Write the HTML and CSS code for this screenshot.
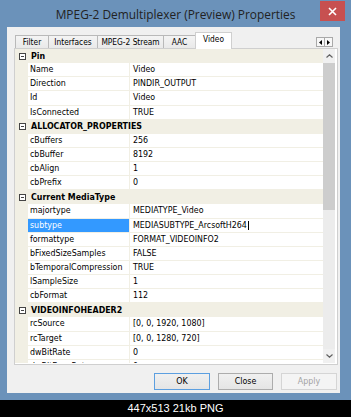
FILE: index.html
```html
<!DOCTYPE html>
<html>
<head>
<meta charset="utf-8">
<link rel="stylesheet" href="styles.css">
</head>
<body>
<div class="window">
  <div class="titlebar">
    <span class="title">MPEG-2 Demultiplexer (Preview) Properties</span>
    <div class="close"><svg width="9" height="9" viewBox="0 0 9 9"><path d="M1 1L8 8M8 1L1 8" stroke="#fff" stroke-width="1.6"/></svg></div>
  </div>
  <div class="frame-body">
    <div class="client">
      <div class="tabbar">
        <div class="tab t1">Filter</div>
        <div class="tab t2">Interfaces</div>
        <div class="tab t3">MPEG-2 Stream</div>
        <div class="tab t4">AAC</div>
        <div class="tab t5 selected">Video</div>
        <div class="tab-scroll">
          <span class="arrowbtn"><svg width="3" height="5" viewBox="0 0 3 5"><path d="M3 0V5L0 2.5Z" fill="#000"/></svg></span>
          <span class="arrowbtn"><svg width="3" height="5" viewBox="0 0 3 5"><path d="M0 0V5L3 2.5Z" fill="#000"/></svg></span>
        </div>
      </div>
      <div class="panel">
        <div class="grid">
          <div class="row cat"><span class="toggle"></span><span class="cat-label">Pin</span></div>
          <div class="row"><span class="gut"></span><span class="name">Name</span><span class="val">Video</span></div>
          <div class="row"><span class="gut"></span><span class="name">Direction</span><span class="val">PINDIR_OUTPUT</span></div>
          <div class="row"><span class="gut"></span><span class="name">Id</span><span class="val">Video</span></div>
          <div class="row"><span class="gut"></span><span class="name">IsConnected</span><span class="val">TRUE</span></div>
          <div class="row cat"><span class="toggle"></span><span class="cat-label">ALLOCATOR_PROPERTIES</span></div>
          <div class="row"><span class="gut"></span><span class="name">cBuffers</span><span class="val">256</span></div>
          <div class="row"><span class="gut"></span><span class="name">cbBuffer</span><span class="val">8192</span></div>
          <div class="row"><span class="gut"></span><span class="name">cbAlign</span><span class="val">1</span></div>
          <div class="row"><span class="gut"></span><span class="name">cbPrefix</span><span class="val">0</span></div>
          <div class="row cat"><span class="toggle"></span><span class="cat-label">Current MediaType</span></div>
          <div class="row"><span class="gut"></span><span class="name">majortype</span><span class="val">MEDIATYPE_Video</span></div>
          <div class="row"><span class="gut"></span><span class="name sel">subtype</span><span class="val edit">MEDIASUBTYPE_ArcsoftH264<span class="caret"></span></span></div>
          <div class="row"><span class="gut"></span><span class="name">formattype</span><span class="val">FORMAT_VIDEOINFO2</span></div>
          <div class="row"><span class="gut"></span><span class="name">bFixedSizeSamples</span><span class="val">FALSE</span></div>
          <div class="row"><span class="gut"></span><span class="name">bTemporalCompression</span><span class="val">TRUE</span></div>
          <div class="row"><span class="gut"></span><span class="name">lSampleSize</span><span class="val">1</span></div>
          <div class="row"><span class="gut"></span><span class="name">cbFormat</span><span class="val">112</span></div>
          <div class="row cat"><span class="toggle"></span><span class="cat-label">VIDEOINFOHEADER2</span></div>
          <div class="row"><span class="gut"></span><span class="name">rcSource</span><span class="val">[0, 0, 1920, 1080]</span></div>
          <div class="row"><span class="gut"></span><span class="name">rcTarget</span><span class="val">[0, 0, 1280, 720]</span></div>
          <div class="row"><span class="gut"></span><span class="name">dwBitRate</span><span class="val">0</span></div>
          <div class="row"><span class="gut"></span><span class="name">dwBitErrorRate</span><span class="val">0</span></div>
        </div>
        <div class="vscroll">
          <div class="sb-btn"><svg width="7" height="4" viewBox="0 0 7 4"><path d="M0.5 3.5L3.5 0.8L6.5 3.5" fill="none" stroke="#606060" stroke-width="1.2"/></svg></div>
          <div class="thumb"></div>
          <div class="sb-track"></div>
          <div class="sb-btn"><svg width="7" height="4" viewBox="0 0 7 4"><path d="M0.5 0.5L3.5 3.2L6.5 0.5" fill="none" stroke="#606060" stroke-width="1.2"/></svg></div>
        </div>
      </div>
      <div class="buttons">
        <button class="btn default">OK</button>
        <button class="btn close-btn">Close</button>
        <button class="btn disabled">Apply</button>
      </div>
    </div>
  </div>
</div>
<div class="caption">447x513 21kb PNG</div>
</body>
</html>
```
FILE: styles.css
```css
html, body {
  margin: 0;
  padding: 0;
}
body {
  width: 351px;
  height: 417px;
  overflow: hidden;
  background: #000;
  font-family: "DejaVu Sans Condensed", "DejaVu Sans", sans-serif;
  font-size: 8.8px;
  color: #000;
}
.window {
  height: 400px;
  background: #6b92ba;
  display: flex;
  flex-direction: column;
}
.titlebar {
  height: 27px;
  flex: none;
  position: relative;
  display: flex;
  align-items: center;
  justify-content: center;
}
.title {
  font-family: "Open Sans", sans-serif;
  font-size: 11.9px;
  color: #222;
  white-space: nowrap;
}
.close {
  position: absolute;
  top: 1px;
  right: 6px;
  width: 25px;
  height: 20px;
  background: #c75050;
  display: flex;
  align-items: center;
  justify-content: center;
}
.frame-body {
  flex: 1;
  padding: 0 11px 7px 7px;
  display: flex;
}
.client {
  flex: 1;
  background: #f0f0f0;
  display: flex;
  flex-direction: column;
}
.tabbar {
  display: flex;
  align-items: flex-end;
  height: 16px;
  margin-top: 5px;
  padding: 0 7px 0 8px;
  position: relative;
  z-index: 1;
  font-size: 8.3px;
}
.tab {
  height: 13px;
  box-sizing: border-box;
  border: 1px solid #b9b9b9;
  border-bottom: none;
  margin-left: -1px;
  background: linear-gradient(#f4f4f4, #e9e9e9);
  display: flex;
  align-items: center;
  justify-content: center;
  white-space: nowrap;
  line-height: 11px;
}
.t1 { width: 34px; margin-left: 0; }
.t2 { width: 50px; }
.t3 { width: 67px; }
.t4 { width: 33px; }
.t5 { width: 37px; }
.tab.selected {
  height: 17px;
  margin-bottom: -1px;
  background: #fff;
  border-color: #cfcfcf;
  padding-bottom: 3px;
}
.tab-scroll {
  margin-left: auto;
  align-self: flex-start;
  margin-top: 5px;
  display: flex;
}
.arrowbtn {
  width: 9px;
  height: 10px;
  box-sizing: border-box;
  border: 1px solid #a9a9a9;
  background: #f7f7f7;
  display: flex;
  align-items: center;
  justify-content: center;
}
.arrowbtn + .arrowbtn {
  margin-left: -1px;
}
.panel {
  margin: 0 2px 0 7px;
  height: 317px;
  box-sizing: border-box;
  border: 1px solid #cfcfcf;
  background: #fff;
  display: flex;
  padding: 0 2px 1px 0;
}
.grid {
  flex: 1;
  background: #f1efe4;
  overflow: hidden;
}
.row {
  display: flex;
  height: 14.14px;
  box-sizing: border-box;
  padding-bottom: 1px;
  line-height: 13px;
  white-space: nowrap;
}
.gut {
  width: 13px;
  flex: none;
}
.name {
  width: 101px;
  flex: none;
  box-sizing: border-box;
  background: #fff;
  padding-left: 2px;
  margin-right: 1px;
  overflow: hidden;
}
.name.sel {
  background: #3399ff;
  color: #fff;
}
.val {
  flex: 1;
  background: #fff;
  padding-left: 3px;
  overflow: hidden;
  display: flex;
  align-items: center;
}
.caret {
  display: inline-block;
  width: 1px;
  height: 9px;
  background: #000;
  margin-left: 1px;
}
.row.cat {
  align-items: center;
}
.toggle {
  width: 7px;
  height: 7px;
  box-sizing: border-box;
  border: 1px solid #444;
  margin-left: 4px;
  margin-top: 1px;
  background: linear-gradient(#444, #444) center / 3px 1px no-repeat, #fff;
}
.cat-label {
  font-weight: bold;
  margin-left: 5px;
  padding-top: 1px;
}
.vscroll {
  width: 12px;
  flex: none;
  display: flex;
  flex-direction: column;
  background: #ececec;
}
.sb-btn {
  height: 14px;
  flex: none;
  display: flex;
  align-items: center;
  justify-content: center;
  background: #f0f0f0;
}
.thumb {
  height: 147px;
  flex: none;
  background: #cdcdcd;
}
.sb-track {
  flex: 1;
}
.buttons {
  display: flex;
  justify-content: flex-end;
  gap: 8px;
  margin-top: 8px;
  padding-right: 3px;
}
.btn {
  font: inherit;
  width: 56px;
  height: 17px;
  box-sizing: border-box;
  border: 1px solid #acacac;
  background: linear-gradient(#f0f0f0, #e5e5e5);
  padding: 0;
  color: #000;
  line-height: 13px;
}
.btn.close-btn {
  width: 55px;
}
.btn.default {
  border-color: #5c9fe0;
}
.btn.disabled {
  color: #a3a3a3;
  border-color: #d5d5d5;
  background: #f4f4f4;
}
.caption {
  height: 17px;
  line-height: 17px;
  text-align: center;
  color: #fff;
  font-family: "Liberation Sans", Arial, sans-serif;
  font-size: 11px;
}
```
